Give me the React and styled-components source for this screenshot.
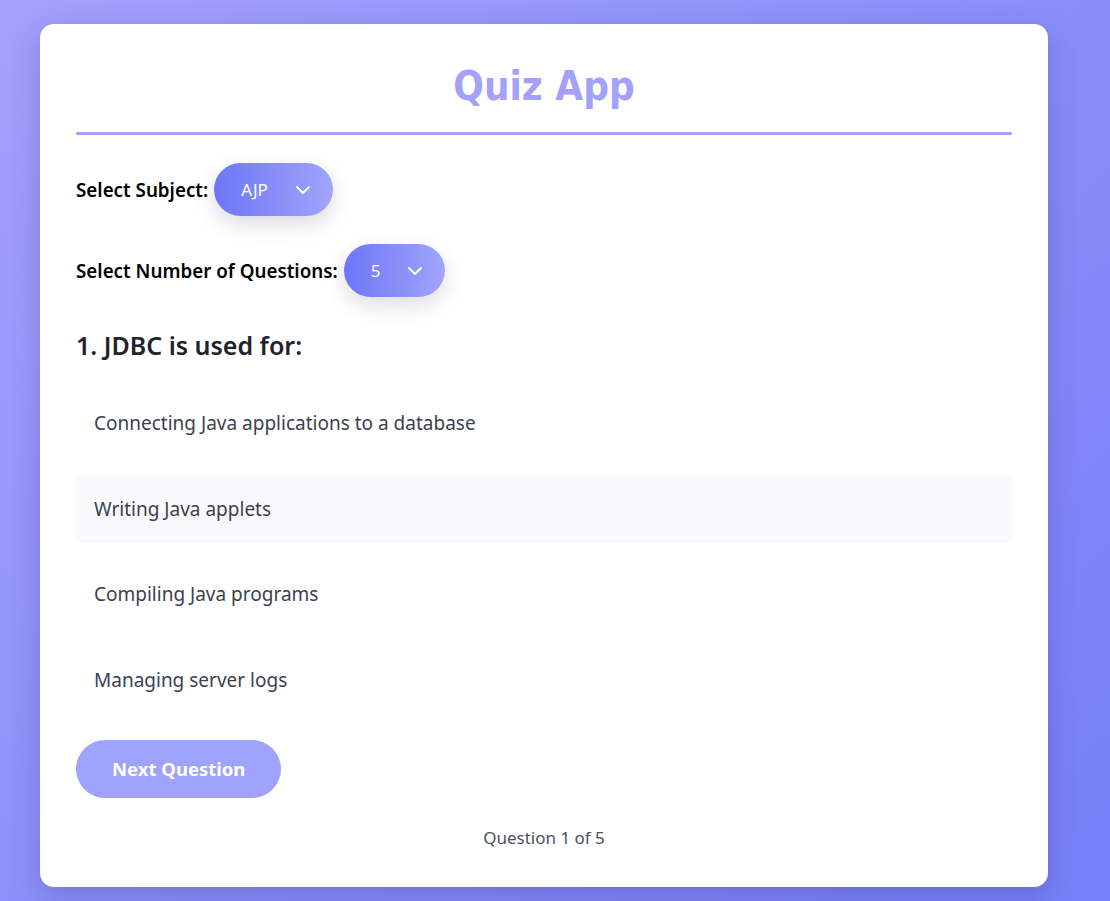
import React, { useState } from "react";
import styled, { createGlobalStyle } from "styled-components";

const GlobalStyle = createGlobalStyle`
  html, body {
    margin: 0;
    min-height: 100%;
  }
  body {
    min-height: 901px;
    background: linear-gradient(135deg, #a3a1fc 0%, #8c8ff9 50%, #767ff7 100%);
    font-family: "Noto Sans", "Open Sans", sans-serif;
  }
`;

const Page = styled.div`
  padding: 24px 40px 15px;
`;

const Card = styled.div`
  width: 1008px;
  box-sizing: border-box;
  background: #fff;
  border-radius: 14px;
  padding: 34px 36px 37px;
  box-shadow: 0 10px 30px rgba(40, 40, 120, 0.25);
`;

const Title = styled.h1`
  margin: 0;
  text-align: center;
  font-family: "DejaVu Sans Condensed", "DejaVu Sans", sans-serif;
  font-stretch: condensed;
  font-weight: 700;
  font-size: 40px;
  line-height: 56px;
  color: #a3a1fb;
`;

const Divider = styled.div`
  height: 3px;
  border-radius: 2px;
  background: #a3a1fb;
  margin: 18px 0 28px;
`;

const FieldRow = styled.div`
  display: flex;
  align-items: center;
  gap: 6px;
  margin-bottom: ${(p) => p.$space}px;
`;

const Label = styled.label`
  font-size: 18.8px;
  font-weight: 600;
  color: #000;
`;

const Pill = styled.div`
  display: flex;
  align-items: center;
  gap: 27px;
  height: 53px;
  padding: 0 22px 0 27px;
  border-radius: 27px;
  background: linear-gradient(90deg, #6d76f6 0%, #a2a4fc 100%);
  box-shadow: 0 8px 20px rgba(60, 60, 110, 0.18);
  color: #fff;
  font-size: 17px;
`;

const Question = styled.h2`
  margin: 0 0 27px;
  font-size: 25px;
  line-height: 34px;
  font-weight: 600;
  color: #1f2330;
`;

const Options = styled.div`
  display: flex;
  flex-direction: column;
  gap: 17.5px;
`;

const Option = styled.div`
  height: 68px;
  display: flex;
  align-items: center;
  padding: 0 18px;
  border-radius: 8px;
  font-size: 19px;
  color: #3a4150;
  background: ${(p) => (p.$hover ? "#fafafd" : "transparent")};
  cursor: pointer;
`;

const NextButton = styled.button`
  display: block;
  margin-top: 26px;
  height: 58px;
  padding: 0 36px;
  border: none;
  border-radius: 29px;
  background: #a0a3fc;
  color: #fff;
  font-family: inherit;
  font-size: 18.5px;
  font-weight: 700;
`;

const Progress = styled.div`
  margin-top: 28px;
  text-align: center;
  font-size: 17px;
  line-height: 24px;
  color: #4a5263;
`;

const Chevron = () => (
  <svg width="16" height="10" viewBox="0 0 16 10" fill="none" stroke="#fff" strokeWidth="2" strokeLinecap="round" strokeLinejoin="round">
    <path d="M2 2l6 6 6-6" />
  </svg>
);

const options = [
  "Connecting Java applications to a database",
  "Writing Java applets",
  "Compiling Java programs",
  "Managing server logs",
];

export default function App() {
  const [hovered] = useState(1);
  return (
    <Page>
      <GlobalStyle />
      <Card>
        <Title>Quiz App</Title>
        <Divider />
        <FieldRow $space={28}>
          <Label>Select Subject:</Label>
          <Pill>
            AJP
            <Chevron />
          </Pill>
        </FieldRow>
        <FieldRow $space={31}>
          <Label>Select Number of Questions:</Label>
          <Pill>
            5
            <Chevron />
          </Pill>
        </FieldRow>
        <Question>1. JDBC is used for:</Question>
        <Options>
          {options.map((o, i) => (
            <Option key={o} $hover={i === hovered}>
              {o}
            </Option>
          ))}
        </Options>
        <NextButton>Next Question</NextButton>
        <Progress>Question 1 of 5</Progress>
      </Card>
    </Page>
  );
}
